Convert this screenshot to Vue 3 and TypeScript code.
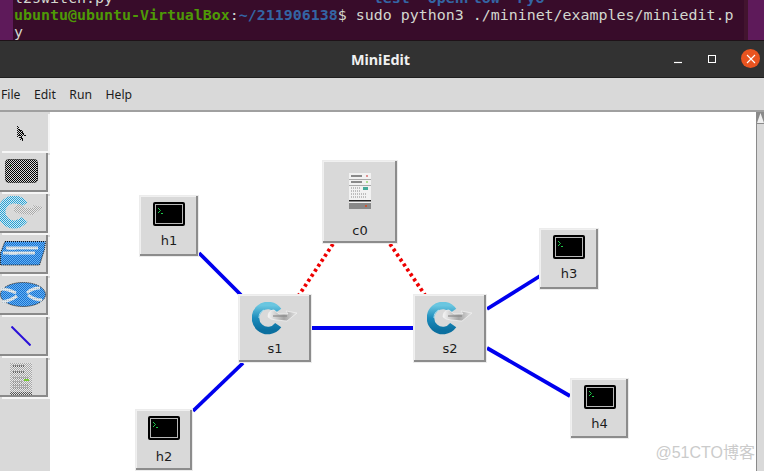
<script setup lang="ts">
interface Node { id: string; cls: string; kind: string }
const nodes: Node[] = [
  { id: 'h1', cls: 'n-h1', kind: 'host' },
  { id: 'h2', cls: 'n-h2', kind: 'host' },
  { id: 'h3', cls: 'n-h3', kind: 'host' },
  { id: 'h4', cls: 'n-h4', kind: 'host' },
  { id: 'c0', cls: 'n-c0', kind: 'ctrl' },
  { id: 's1', cls: 'n-s1', kind: 'sw' },
  { id: 's2', cls: 'n-s2', kind: 'sw' },
]
const blue = [
  [149, 141, 191, 183],
  [143, 299, 193, 251],
  [262, 216, 364, 216],
  [437, 197, 490, 164],
  [437, 236, 520, 284],
]
const red = [
  [283, 132, 249, 183],
  [340, 132, 375, 183],
]
const tools = ['cursor', 'host', 'switch', 'router', 'ring', 'link', 'ctrl']
const file1 = 'l2switch.py' + ' '.repeat(29)
const dirs = 'test  OpenFlow  Pyo'
</script>

<template>
  <div class="app">
    <svg class="defs" width="0" height="0" aria-hidden="true">
      <defs>
        <pattern id="chkBlack" width="2" height="2" patternUnits="userSpaceOnUse"><rect width="2" height="2" fill="#d9d9d9" /><rect width="1" height="1" fill="#000" /><rect x="1" y="1" width="1" height="1" fill="#000" /></pattern>
        <pattern id="chkBlue" width="2" height="2" patternUnits="userSpaceOnUse"><rect width="2" height="2" fill="#cfeaf5" /><rect width="1" height="1" fill="#2a9fd0" /><rect x="1" y="1" width="1" height="1" fill="#2a9fd0" /></pattern>
        <pattern id="chkRoyal" width="2" height="2" patternUnits="userSpaceOnUse"><rect width="2" height="2" fill="#62b4f4" /><rect width="1" height="1" fill="#1c6fd0" /><rect x="1" y="1" width="1" height="1" fill="#1c6fd0" /></pattern>
        <pattern id="chkGray" width="2" height="2" patternUnits="userSpaceOnUse"><rect width="2" height="2" fill="#e8e8e8" /><rect width="1" height="1" fill="#a8a8a8" /><rect x="1" y="1" width="1" height="1" fill="#a8a8a8" /></pattern>
        <pattern id="chkPale" width="2" height="2" patternUnits="userSpaceOnUse"><rect width="2" height="2" fill="#dfe6ea" /><rect width="1" height="1" fill="#b4c0c8" /></pattern>
        <linearGradient id="sg" x1="0" y1="0" x2="0" y2="1"><stop offset="0" stop-color="#6ac6e0" /><stop offset=".5" stop-color="#1c8cbc" /><stop offset="1" stop-color="#0b6f9f" /></linearGradient>
        <linearGradient id="ag" x1="0" y1="0" x2="1" y2="0"><stop offset="0" stop-color="#f6f6f6" /><stop offset=".55" stop-color="#a4a4a4" /><stop offset="1" stop-color="#e4e4e4" /></linearGradient>
      </defs>
    </svg>
    <div class="term">
      <div class="tline cut"><span class="w">{{ file1 }}</span><span class="b">{{ dirs }}</span></div>
      <div class="tline"><span class="g">ubuntu@ubuntu-VirtualBox</span><span class="w">:</span><span class="b">~/211906138</span><span class="w">$ sudo python3 ./mininet/examples/miniedit.p</span></div>
      <div class="tline"><span class="w">y</span></div>
    </div>
    <div class="title">
      <span class="ttext">MiniEdit</span>
      <div class="wbtns">
        <svg width="10" height="10" viewBox="0 0 10 10"><path d="M1 8.500h8" stroke="#fff" stroke-width="1.200" /></svg>
        <svg width="10" height="10" viewBox="0 0 10 10"><rect x="1.500" y="1.500" width="7" height="7" fill="none" stroke="#fff" /></svg>
        <div class="wclose"><svg width="10" height="10" viewBox="0 0 10 10"><path d="M1 1l8 8M9 1l-8 8" stroke="#fff" stroke-width="1.100" /></svg></div>
      </div>
    </div>
    <div class="menu">
      <span>File</span><span>Edit</span><span>Run</span><span>Help</span>
    </div>
    <div class="body">
      <div class="tools">
        <div v-for="(t, i) in tools" :key="t" class="tool" :class="[`t-${t}`, { active: i === 0 }]">
          <svg v-if="t === 'cursor'" width="10" height="16" viewBox="0 0 10 16" shape-rendering="crispEdges"><path d="M1 1v11l2-2 2 5h2l-2-5h4z" fill="url(#chkBlack)" stroke="#111" stroke-dasharray="1 1" /></svg>
          <svg v-else-if="t === 'host'" width="33" height="25" viewBox="0 0 33 25"><rect x=".5" y=".5" width="32" height="23" rx="3" fill="url(#chkBlack)" stroke="#000" stroke-dasharray="1 1" /><rect x="5" y="6" width="1" height="1" fill="#3c3" /></svg>
          <svg v-else-if="t === 'switch'" width="46" height="33" viewBox="0 0 46 33"><path d="M26.200 8.800A12.500 12.500 0 1 0 26.200 23.200" fill="none" stroke="url(#chkBlue)" stroke-width="8" /><path d="M16 15C16 10 19 8 22 8l5 4h9l-2-3 11 2-10 8-11-1-5-1z" fill="url(#chkGray)" /></svg>
          <svg v-else-if="t === 'router'" width="46" height="25" viewBox="0 0 46 25"><path d="M5 .5h40.500l-1 8-5 15.500H.5v-12z" fill="url(#chkRoyal)" stroke="#111" stroke-dasharray="1 1" /><path d="M6 7h32M3 12h32" stroke="url(#chkPale)" stroke-width="3" /><path d="M8 8h8M9 13h8" stroke="#e8eef2" /></svg>
          <svg v-else-if="t === 'ring'" width="46" height="25" viewBox="0 0 46 25"><ellipse cx="23" cy="12.500" rx="22.500" ry="12" fill="url(#chkRoyal)" stroke="#111" stroke-dasharray="1 1" /><path d="M1 7c6 0 11 2 15 4M2 20c5-1 11-3 15-6M27 11c4-4 8-5 13-5M28 13c4 3 9 5 14 5" fill="none" stroke="url(#chkPale)" stroke-width="3" /></svg>
          <svg v-else-if="t === 'link'" width="20" height="20" viewBox="0 0 20 20"><path d="M.5.500l19 19" stroke="#2a10d8" stroke-width="2" /></svg>
          <svg v-else width="22" height="34" viewBox="0 0 22 34"><rect width="22" height="34" fill="url(#chkGray)" /><path d="M3 3h11M3 9h11" stroke="#111" stroke-dasharray="1 1" /><path d="M3 15h16M3 19h9M3 22h16M3 25h16" stroke="#777" stroke-dasharray="1 1" /><rect x="14" y="16" width="5" height="2" fill="#7c3" /><rect y="29" width="22" height="5" fill="url(#chkBlack)" opacity=".5" /><rect x="18" y="32" width="2" height="2" fill="#e33" /></svg>
        </div>
      </div>
      <div class="canvas">
        <svg class="links" width="706" height="359" viewBox="0 0 706 359">
          <line v-for="(l, i) in blue" :key="i" :x1="l[0]" :y1="l[1]" :x2="l[2]" :y2="l[3]" stroke="#0000ee" stroke-width="3.800" />
          <line v-for="(l, i) in red" :key="'r' + i" :x1="l[0]" :y1="l[1]" :x2="l[2]" :y2="l[3]" stroke="#ee0000" stroke-width="3.800" stroke-dasharray="3 3" />
        </svg>
        <div v-for="n in nodes" :key="n.id" class="node" :class="n.cls">
          <svg v-if="n.kind === 'host'" width="32" height="24" viewBox="0 0 32 24" class="ic"><rect x="0" y="0" width="32" height="24" rx="2" fill="#000" /><rect x="2.500" y="2.500" width="27" height="19" fill="#000" stroke="#b8b8b8" /><path d="M5 6l2.500 2.500L5 11" fill="none" stroke="#1fc84a" /><path d="M8 11.500h2" stroke="#1fc84a" /></svg>
          <svg v-else-if="n.kind === 'ctrl'" width="22" height="36" viewBox="0 0 22 36" class="ic"><rect width="22" height="36" fill="#f2f2f2" /><path d="M2 3h11" stroke="#222" /><rect x="17" y="2.500" width="2" height="1" fill="#c33" /><path d="M2 9h11" stroke="#222" /><rect x="17" y="8.500" width="2" height="1" fill="#6c3" /><path d="M0 6.500h22M0 12.500h22" stroke="#aaa" /><path d="M2 15h9M2 18h9M2 21h15M2 24h15" stroke="#888" stroke-dasharray="1 1" /><rect x="14" y="14" width="5" height="3" fill="#4a9" /><rect y="27" width="22" height="1.500" fill="#222" /><rect y="30" width="22" height="6" fill="#888" /><rect x="16" y="32" width="2" height="2" fill="#c53" /></svg>
          <svg v-else width="46" height="33" viewBox="0 0 46 33" class="ic"><path d="M26.200 8.800A12.500 12.500 0 1 0 26.200 23.200" fill="none" stroke="url(#sg)" stroke-width="7.500" /><path d="M7 16a9 9 0 0 1 5-8" fill="none" stroke="#bfe6f2" /><path d="M16 15C16 10 19 8 22 8l5 4h9l-2-3 11 2-10 8-11-1-5-1z" fill="url(#ag)" stroke="#f4f4f4" stroke-width=".7" /><path d="M21 14h14" stroke="#8a8a8a" stroke-width="1.200" /></svg>
          <span class="lbl">{{ n.id }}</span>
        </div>
        <div class="mark">@51CTO博客</div>
      </div>
      <div class="side">
        <svg width="7" height="12" viewBox="0 0 7 12"><rect width="7" height="12" fill="#8a8a8a" /><path d="M3.500 1L0 11h7z" fill="#efefef" /></svg>
      </div>
    </div>
  </div>
</template>

<style>
html, body { margin: 0; overflow: hidden; }
</style>

<style scoped>
.app { width: 764px; height: 471px; display: flex; flex-direction: column; overflow: hidden; background: #d9d9d9; font-family: "DejaVu Sans", sans-serif; }
.defs { position: absolute; }
.term { height: 41px; flex: none; box-sizing: border-box; padding: 0 0 0 14px; background: #380c2a; border-bottom: 1px solid #1e1218; font: 14.950px/17px "DejaVu Sans Mono", monospace; overflow: hidden; box-shadow: inset 13px 0 0 #5e1a5a, inset -16px 0 0 #5e1a5a, inset -20px 0 0 #42142f; }
.tline { height: 17px; white-space: pre; }
.cut { margin-top: -10px; }
.g { color: #4e9a06; font-weight: 700; }
.b { color: #3465a4; font-weight: 700; }
.w { color: #d3d7cf; }
.title { height: 37px; flex: none; box-sizing: border-box; background: #323232; border-bottom: 1px solid #1f1f1f; display: flex; align-items: center; justify-content: center; position: relative; }
.ttext { color: #f0f0f0; font: 700 14.400px "Noto Sans", sans-serif; margin-left: -3px; }
.wbtns { position: absolute; right: 4px; top: 8px; display: flex; align-items: center; gap: 24px; }
.wclose { width: 19px; height: 19px; border-radius: 50%; background: #e95420; display: flex; align-items: center; justify-content: center; }
.menu { height: 34px; flex: none; display: flex; align-items: center; gap: 13.500px; padding-left: 1px; padding-top: 1px; font: 12.200px "Noto Sans", sans-serif; color: #1c1c1c; background: #d9d9d9; border-bottom: 2px solid #a0a0a0; box-sizing: border-box; }
.body { flex: 1; display: flex; min-height: 0; }
.tools { width: 50px; flex: none; display: flex; flex-direction: column; gap: 2px; box-sizing: border-box; }
.tool { width: 48px; height: 39px; flex: none; box-sizing: border-box; padding-right: 4px; border-right: 2px solid #8a8a8a; border-bottom: 2px solid #8a8a8a; box-shadow: 2px 2px 0 #f6f6f6; background: #d9d9d9; display: flex; align-items: center; justify-content: center; overflow: hidden; }
.tool svg { flex: none; }
.tool.active { border-right: 2px solid #d9d9d9; border-bottom: 2px solid #d9d9d9; }
.t-router, .t-ring { padding-right: 0; }
.t-cursor svg { margin-top: 5px; }
.t-ctrl svg { margin-top: 7px; }
.canvas { flex: 1; position: relative; background: #fff; overflow: hidden; }
.links { position: absolute; left: 0; top: 0; }
.side { width: 8px; flex: none; box-sizing: border-box; border-left: 1px solid #8a8a8a; background: #d9d9d9; }
.side svg { display: block; }
.node { position: absolute; box-sizing: border-box; background: #d9d9d9; border: 1px solid #ececec; box-shadow: inset -2px -2px 0 #8c8c8c, inset 1px 1px 0 #f0f0f0; display: flex; flex-direction: column; align-items: center; font: 13px "DejaVu Sans", sans-serif; color: #1c1c1c; }
.ic { margin-top: 6px; flex: none; }
.lbl { margin-top: 7px; line-height: 16px; }
.n-h1 { left: 89px; top: 83px; width: 60px; height: 62px; }
.n-h2 { left: 85px; top: 297px; width: 58px; height: 62px; }
.n-h2 .lbl { margin-top: 9px; }
.n-h3 { left: 489px; top: 116px; width: 60px; height: 62px; }
.n-h4 { left: 520px; top: 266px; width: 59px; height: 61px; }
.n-c0 { left: 272px; top: 48px; width: 76px; height: 84px; }
.n-c0 .ic { margin-top: 12px; }
.n-c0 .lbl { margin-top: 14px; }
.n-s1 { left: 188px; top: 182px; width: 74px; height: 69px; }
.n-s2 { left: 363px; top: 182px; width: 74px; height: 69px; }
.n-s1 .ic, .n-s2 .ic { margin-top: 7px; }
.n-s1 .lbl, .n-s2 .lbl { margin-top: 6px; }
.mark { position: absolute; right: 1px; bottom: 8px; font: 16px "Liberation Sans", "Noto Sans CJK SC", sans-serif; color: #cbcbcb; }
</style>
